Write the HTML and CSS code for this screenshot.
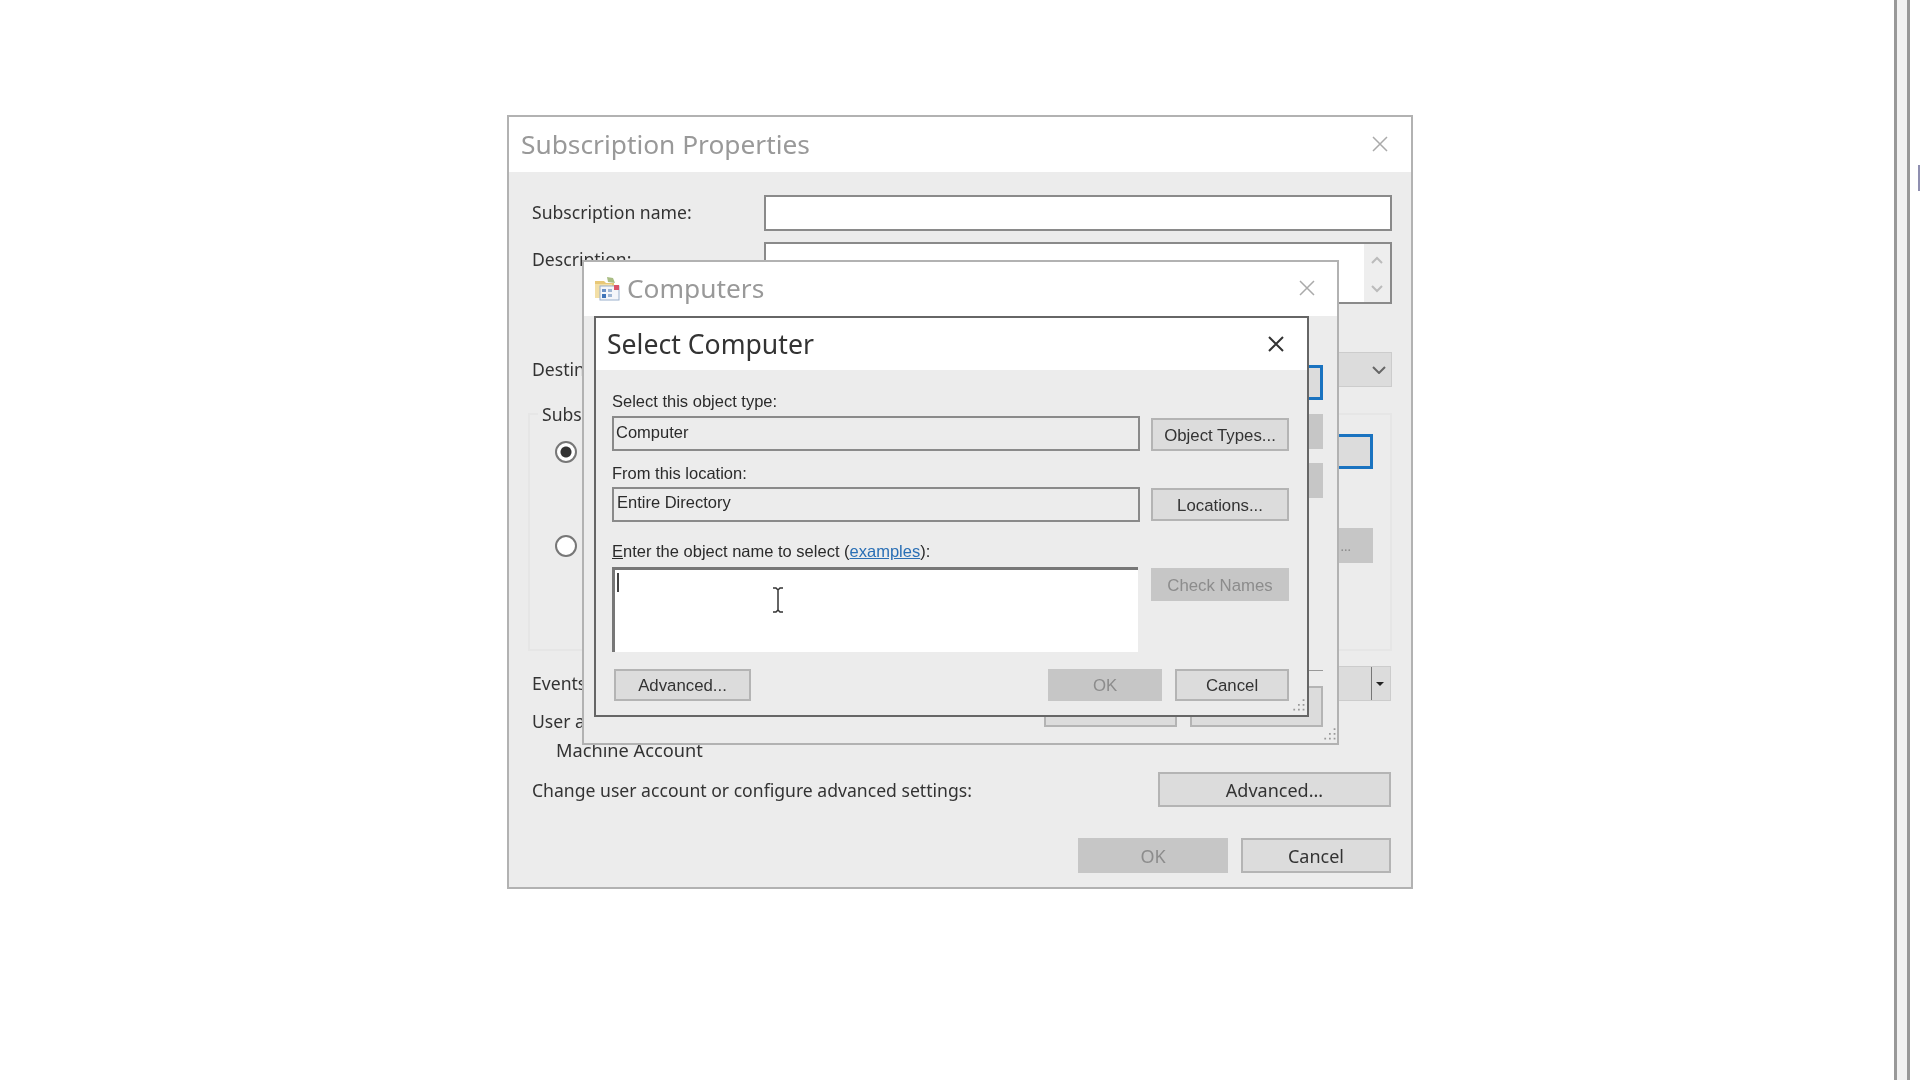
FILE: index.html
```html
<!DOCTYPE html>
<html lang="en">
<head>
    <meta charset="UTF-8">
    <title>Select Computer</title>
    <link rel="stylesheet" href="styles.css">
</head>
<body>
    <div class="screen">
        <!-- Subscription Properties -->
        <div class="window window-sub">
            <div class="titlebar">
                <span class="title title-off">Subscription Properties</span>
                <svg class="close" viewBox="0 0 16 16"><path d="M1 1L15 15M15 1L1 15"/></svg>
            </div>
            <div class="sub-body">
                <div class="sub-row row-name">
                    <label>Subscription name:</label>
                    <div class="input"></div>
                </div>
                <div class="sub-row row-desc">
                    <label>Description:</label>
                    <div class="input input-desc">
                        <div class="scroll">
                            <svg viewBox="0 0 12 8"><path d="M1 7L6 2L11 7"/></svg>
                            <svg viewBox="0 0 12 8"><path d="M1 1L6 6L11 1"/></svg>
                        </div>
                    </div>
                </div>
                <div class="sub-row row-dest">
                    <label>Destin</label>
                    <div class="combo">
                        <svg class="combo-arrow" viewBox="0 0 14 8"><path d="M1 1L7 7L13 1"/></svg>
                    </div>
                </div>
                <fieldset class="group">
                    <legend>Subs</legend>
                    <div class="group-row">
                        <span class="radio radio-on"></span>
                        <button class="btn btn-blue"></button>
                    </div>
                    <div class="group-row group-row-2">
                        <span class="radio"></span>
                        <button class="btn btn-off btn-dots">...</button>
                    </div>
                </fieldset>
                <div class="sub-row row-events">
                    <label>Events</label>
                    <div class="combo combo-drop"><span class="drop"></span></div>
                </div>
                <div class="plain row-user">User a</div>
                <div class="plain row-machine">Machine Account</div>
                <div class="row-change">
                    <span class="plain">Change user account or configure advanced settings:</span>
                    <button class="btn btn-big">Advanced...</button>
                </div>
                <div class="row-footer">
                    <button class="btn btn-off btn-foot">OK</button>
                    <button class="btn btn-foot">Cancel</button>
                </div>
            </div>
        </div>

        <!-- Computers -->
        <div class="window window-comp">
            <div class="titlebar titlebar-comp">
                <svg class="app-icon" viewBox="0 0 26 26">
                    <path d="M1 6h9l2 2h8v5H1z" fill="#e8c877"/>
                    <path d="M1 9h17v14H1z" fill="#f3dfa6"/>
                    <path d="M13 2l6 1 2 5-7-1z" fill="#a9bd84"/>
                    <rect x="6" y="11" width="19" height="14" fill="#f4f6fa" stroke="#9ab0cc"/>
                    <rect x="8" y="14" width="4" height="3" fill="#6d93c6"/>
                    <rect x="14" y="14" width="4" height="3" fill="#9fb6d4"/>
                    <rect x="8" y="19" width="4" height="4" fill="#3f74b8"/>
                    <rect x="14" y="19" width="4" height="3" fill="#9fb6d4"/>
                    <rect x="20" y="10" width="5" height="5" fill="#d9536a"/>
                </svg>
                <span class="title title-off">Computers</span>
                <svg class="close" viewBox="0 0 16 16"><path d="M1 1L15 15M15 1L1 15"/></svg>
            </div>
            <div class="comp-body">
                <div class="comp-side">
                    <button class="btn btn-side btn-focus"></button>
                    <button class="btn btn-side btn-off"></button>
                    <button class="btn btn-side btn-off"></button>
                </div>
                <div class="comp-rule"></div>
                <div class="comp-footer">
                    <button class="btn btn-comp"></button>
                    <button class="btn btn-comp"></button>
                </div>
            </div>
            <svg class="grip grip-comp" viewBox="0 0 12 12"><path d="M10 1h1.500M6 5h1.500M10 5h1.500M2 9h1.500M6 9h1.500M10 9h1.500"/></svg>
        </div>

        <!-- Select Computer -->
        <div class="window window-select">
            <div class="titlebar titlebar-select">
                <span class="title title-select">Select Computer</span>
                <svg class="close close-on" viewBox="0 0 16 16"><path d="M1 1L15 15M15 1L1 15"/></svg>
            </div>
            <div class="select-body">
                <div class="caption">Select this object type:</div>
                <div class="pick-row">
                    <div class="readonly">Computer</div>
                    <button class="btn btn-pick btn-pick-first">Object Types...</button>
                </div>
                <div class="caption caption-2">From this location:</div>
                <div class="pick-row">
                    <div class="readonly readonly-dir">Entire Directory</div>
                    <button class="btn btn-pick">Locations...</button>
                </div>
                <div class="caption caption-3"><u>E</u>nter the object name to select (<a href="#">examples</a>):</div>
                <div class="pick-row pick-row-names">
                    <div class="names">
                        <span class="caret"></span>
                        <svg class="ibeam" viewBox="0 0 12 26"><path d="M1 1h3l2 2 2-2h3M6 3v20M1 25h3l2-2 2 2h3"/></svg>
                    </div>
                    <button class="btn btn-pick btn-off">Check Names</button>
                </div>
                <div class="select-footer">
                    <button class="btn btn-adv">Advanced...</button>
                    <button class="btn btn-off btn-dlg">OK</button>
                    <button class="btn btn-dlg">Cancel</button>
                </div>
            </div>
            <svg class="grip grip-select" viewBox="0 0 12 12"><path d="M10 1h1.500M6 5h1.500M10 5h1.500M2 9h1.500M6 9h1.500M10 9h1.500"/></svg>
        </div>

        <!-- window edge on the right of the recording -->
        <div class="edge"><span class="edge-mark"></span></div>
    </div>
</body>
</html>
```

FILE: styles.css
```css
/* Global styles */
html, body {
    margin: 0;
    padding: 0;
    background-color: #fff;
}

.screen {
    position: relative;
    width: 1920px;
    height: 1080px;
    overflow: hidden;
    filter: blur(0.6px);
    font-family: "Noto Sans", sans-serif;
    color: #333;
}

.window {
    position: absolute;
    box-sizing: border-box;
    background-color: #ececec;
    border: 2px solid #b2b2b2;
}

.window-sub {
    left: 507px;
    top: 115px;
    width: 906px;
    height: 774px;
}

.window-comp {
    left: 582px;
    top: 260px;
    width: 757px;
    height: 485px;
}

.window-select {
    left: 594px;
    top: 316px;
    width: 715px;
    height: 401px;
    border-color: #666;
}

/* Title bars */
.titlebar {
    box-sizing: border-box;
    display: flex;
    align-items: center;
    height: 55px;
    padding: 0 23px 2px 12px;
    background-color: #fff;
}

.titlebar-comp {
    height: 54px;
    padding: 0 22px 2px 10px;
}

.titlebar-select {
    height: 52px;
    padding: 0 23px 0 11px;
}

.title {
    flex: 1;
    font-size: 26.3px;
    color: #333;
}

.title-select {
    font-size: 26.6px;
}

.title-off {
    color: #999;
}

.close {
    width: 16px;
    height: 16px;
    fill: none;
    stroke: #aaa;
    stroke-width: 1.5;
}

.close-on {
    stroke: #333;
    stroke-width: 2;
}

.app-icon {
    width: 26px;
    height: 26px;
    margin-right: 7px;
}

/* Buttons */
.btn {
    box-sizing: border-box;
    padding: 0;
    border: 2px solid #b4b4b4;
    background-color: #dcdcdc;
    color: #333;
    font-family: inherit;
    font-size: 18px;
}

.btn-off {
    border-color: #c6c6c6;
    background-color: #c6c6c6;
    color: #8c8c8c;
}

/* Subscription Properties */
.sub-body {
    padding: 23px 19px 0 23px;
}

.sub-row {
    display: flex;
    align-items: center;
}

.sub-row label {
    width: 232px;
    flex-shrink: 0;
    margin-bottom: 2px;
    font-size: 17.6px;
}

.input {
    flex: 1;
    box-sizing: border-box;
    height: 36px;
    border: 2px solid #8a8a8a;
    background-color: #fff;
}

.row-desc {
    align-items: flex-start;
    margin-top: 11px;
}

.row-desc label {
    padding-top: 5px;
}

.input-desc {
    display: flex;
    justify-content: flex-end;
    height: 62px;
}

.scroll {
    display: flex;
    flex-direction: column;
    align-items: center;
    gap: 21px;
    width: 26px;
    padding-top: 12px;
    background-color: #eee;
}

.scroll svg {
    width: 12px;
    height: 8px;
    fill: none;
    stroke: #bbb;
    stroke-width: 2;
}

.row-dest {
    margin-top: 48px;
}

.combo {
    flex: 1;
    position: relative;
    box-sizing: border-box;
    height: 35px;
    border: 1px solid #ccc;
    background-color: #dcdcdc;
}

.combo-arrow {
    position: absolute;
    right: 5px;
    top: 13px;
    width: 14px;
    height: 8px;
    fill: none;
    stroke: #666;
    stroke-width: 2;
}

.group {
    box-sizing: border-box;
    height: 249px;
    margin: 15px 0 0 -4px;
    padding: 0;
    border: 2px solid #e6e6e6;
}

.group legend {
    margin-left: 8px;
    padding: 0 4px;
    font-size: 17.6px;
}

.group-row {
    display: flex;
    align-items: center;
    justify-content: space-between;
    height: 35px;
    margin: 8px 17px 0 25px;
}

.group-row-2 {
    margin-top: 59px;
}

.group-row .btn {
    width: 300px;
    height: 35px;
}

.btn-dots {
    padding-right: 20px;
    text-align: right;
    font-size: 13px;
}

.radio {
    box-sizing: border-box;
    width: 22px;
    height: 22px;
    border: 2px solid #777;
    border-radius: 50%;
    background-color: #fff;
}

.radio-on {
    background: radial-gradient(circle, #333 0 5px, #fff 6px);
}

.btn-blue {
    border: 3px solid #1a73c0;
    background-color: #dcdcdc;
}

.row-events {
    margin-top: 15px;
}

.combo-drop {
    flex: none;
    width: 627px;
    height: 35px;
}

.drop {
    position: absolute;
    right: 18px;
    top: 0;
    bottom: 0;
    width: 1px;
    background-color: #777;
}

.drop::after {
    content: "";
    position: absolute;
    left: 5px;
    top: 15px;
    border-style: solid;
    border-width: 4px 4px 0;
    border-color: #222 transparent transparent;
}

.plain {
    font-size: 17.6px;
}

.row-user {
    height: 24px;
    margin-top: 8px;
    line-height: 24px;
}

.row-machine {
    height: 24px;
    margin: 5px 0 0 24px;
    font-size: 18.2px;
    line-height: 24px;
}

.row-change {
    display: flex;
    align-items: center;
    justify-content: space-between;
    margin-top: 10px;
    padding-right: 1px;
}

.btn-big {
    width: 233px;
    height: 35px;
}

.row-footer {
    display: flex;
    justify-content: flex-end;
    gap: 13px;
    margin-top: 31px;
    padding-right: 1px;
}

.btn-foot {
    width: 150px;
    height: 35px;
}

/* Computers */
.comp-body {
    height: 425px;
}

.comp-side {
    display: flex;
    flex-direction: column;
    align-items: flex-end;
    gap: 14px;
    padding: 49px 14px 0 0;
}

.btn-side {
    width: 133px;
    height: 35px;
}

.btn-focus {
    border: 3px solid #1a73c0;
}

.comp-rule {
    height: 1px;
    margin: 172px 14px 0 200px;
    background-color: #999;
}

.comp-footer {
    display: flex;
    justify-content: flex-end;
    gap: 13px;
    margin-top: 15px;
    padding-right: 14px;
}

.btn-comp {
    width: 133px;
    height: 41px;
}

.grip {
    position: absolute;
    width: 14px;
    height: 14px;
    fill: none;
    stroke: #999;
    stroke-width: 1.500;
}

.grip-comp {
    right: 1px;
    bottom: 1px;
}

.grip-select {
    right: 2px;
    bottom: 2px;
}

/* Select Computer */
.select-body {
    height: 347px;
    box-sizing: border-box;
    padding: 21px 0 0 16px;
    font-family: "Liberation Sans", sans-serif;
    color: #2b2b2b;
}

.caption {
    height: 20px;
    margin-bottom: 5px;
    font-size: 16.5px;
    line-height: 20px;
}

.caption-2 {
    margin-top: 12px;
    margin-bottom: 4px;
}

.caption-3 {
    margin-top: 19px;
    margin-bottom: 6px;
}

.caption a {
    color: #2a6fb5;
}

.pick-row {
    display: flex;
    align-items: flex-start;
    gap: 11px;
}

.readonly {
    box-sizing: border-box;
    width: 528px;
    height: 35px;
    padding: 3px 2px;
    border: 2px solid #8a8a8a;
    font-size: 16.5px;
    line-height: 22px;
}

.readonly-dir {
    padding: 2px 3px;
}

.btn-pick {
    width: 138px;
    height: 33px;
    margin-top: 1px;
    padding-top: 2px;
    font-size: 16.8px;
}

.btn-pick-first {
    margin-top: 2px;
}

.names {
    position: relative;
    box-sizing: border-box;
    width: 526px;
    height: 85px;
    border-top: 3px solid #777;
    border-left: 3px solid #777;
    background-color: #fff;
}

.pick-row-names {
    gap: 13px;
}

.caret {
    position: absolute;
    left: 2px;
    top: 3px;
    width: 2px;
    height: 19px;
    background-color: #444;
}

.ibeam {
    position: absolute;
    left: 157px;
    top: 17px;
    width: 12px;
    height: 26px;
    fill: none;
    stroke: #333;
    stroke-width: 1.500;
}

.select-footer {
    display: flex;
    gap: 13px;
    margin-top: 17px;
    padding: 0 0 0 2px;
}

.btn-adv {
    width: 137px;
    height: 32px;
    margin-right: auto;
    padding-top: 2px;
    font-size: 16.8px;
}

.btn-dlg {
    width: 114px;
    height: 32px;
    padding-top: 2px;
    font-size: 16.8px;
}

.select-footer .btn-dlg:last-child {
    margin-right: 18px;
}

/* Edge */
.edge {
    position: absolute;
    top: 0;
    bottom: 0;
    left: 1894px;
    width: 10px;
    border-left: 3px solid #999;
    border-right: 3px solid #999;
    background-color: #f2f2f2;
}

.edge-mark {
    position: absolute;
    left: 21px;
    top: 165px;
    width: 3px;
    height: 26px;
    background-color: #8f8fb0;
}
```
